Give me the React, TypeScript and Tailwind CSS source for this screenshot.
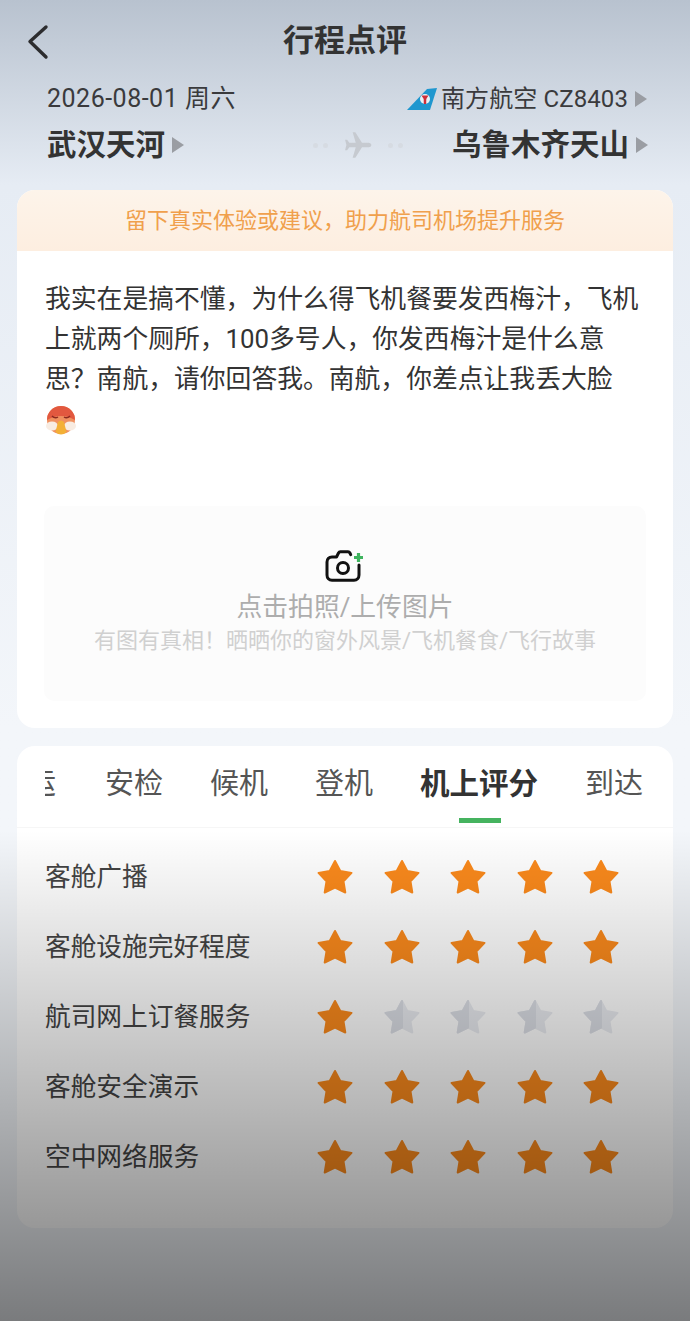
const tabs = ['安检', '候机', '登机', '机上评分', '到达'];

const ratings = [
  { label: '客舱广播', score: 5 },
  { label: '客舱设施完好程度', score: 5 },
  { label: '航司网上订餐服务', score: 1 },
  { label: '客舱安全演示', score: 5 },
  { label: '空中网络服务', score: 5 },
];

const STAR = 'M18 2 L23.300 12 L34.500 13.900 L26.500 22.300 L28.300 33.500 L18 28.500 L7.700 33.500 L9.500 22.300 L1.500 13.900 L12.700 12 Z';

function Star({ on }: { on: boolean }) {
  return (
    <svg width="36" height="36" viewBox="0 0 36 36">
      {on ? (
        <path d={STAR} fill="#fb8a1c" stroke="#fb8a1c" strokeWidth="2" strokeLinejoin="round" />
      ) : (
        <>
          <path d={STAR} fill="#eaecf1" stroke="#eaecf1" strokeWidth="2" strokeLinejoin="round" />
          <path d="M18 2 L12.700 12 L1.500 13.900 L9.500 22.300 L7.700 33.500 L18 28.500 Z" fill="#dcdfe6" stroke="#dcdfe6" strokeWidth="2" strokeLinejoin="round" />
        </>
      )}
    </svg>
  );
}

function Caret() {
  return <span className="ml-[7px] h-0 w-0 border-y-[8px] border-l-[12px] border-y-transparent border-l-[#9a9da3]" />;
}

function TailLogo() {
  return (
    <svg width="30" height="22" viewBox="0 0 30 22">
      <path d="M0 22 L20 1 L30 0 L23 22 Z" fill="#1f97cf" />
      <circle cx="18" cy="11" r="5" fill="#e9f2f6" />
      <path d="M14.500 7.500 L21.500 7.500 L19.300 11 L19.200 16 L16.800 16 L16.700 11 Z" fill="#cf2f3a" />
    </svg>
  );
}

function BackArrow() {
  return (
    <svg width="24" height="36" viewBox="0 0 24 36" fill="none">
      <path d="M20 3 L4 17.500 L20 33" stroke="#2c2c2e" strokeWidth="3.400" strokeLinecap="round" strokeLinejoin="round" />
    </svg>
  );
}

function CameraPlus() {
  return (
    <svg width="40" height="34" viewBox="0 0 40 34" fill="none">
      <path
        d="M9 8 H11.500 L13.500 4 C13.900 3.200 14.500 2.700 15.400 2.700 H23 C23.900 2.700 24.500 3.200 24.900 4 L25.700 5.700 M34 16 V26 C34 29 32 31.300 29 31.300 H7 C4 31.300 2 29 2 26 V13 C2 10 4 8 7 8 H9"
        stroke="#111"
        strokeWidth="3"
        strokeLinecap="round"
        strokeLinejoin="round"
      />
      <circle cx="18" cy="19" r="5.500" stroke="#111" strokeWidth="3" />
      <path d="M33.500 4 V13 M29 8.500 H38" stroke="#3fb45f" strokeWidth="3.200" />
    </svg>
  );
}

function Emoji() {
  return (
    <svg width="32" height="32" viewBox="0 0 32 32">
      <circle cx="16" cy="15" r="14" fill="#f0905f" />
      <path d="M2 15 A14 14 0 0 1 30 15 Q16 7 2 15 Z" fill="#e2583f" />
      <path d="M7 11 Q10 14 13 12 M19 12 Q22 14 25 11" stroke="#8a2a20" strokeWidth="1.500" fill="none" />
      <ellipse cx="7" cy="21" rx="6" ry="4.500" fill="#f8ece2" />
      <ellipse cx="25" cy="21" rx="6" ry="4.500" fill="#f8ece2" />
      <path d="M13 17 Q16 14 19 17 L21.500 27 Q16 32 10.500 27 Z" fill="#f3b036" />
    </svg>
  );
}

export default function App() {
  return (
    <div className="relative h-[1321px] w-[690px] overflow-hidden bg-gradient-to-b from-[#b8c2cf] via-[#e6ecf4] via-[14%] to-[#f3f6fa] to-[55%] font-['Roboto','Noto_Sans_CJK_SC',sans-serif] text-[#333]">
      {/* Header */}
      <div className="relative flex h-[83px] items-center justify-center">
        <div className="absolute left-[26px] top-[24px]">
          <BackArrow />
        </div>
        <h1 className="text-[31px] font-bold text-[#333]">行程点评</h1>
      </div>

      {/* Flight info */}
      <div className="flex h-[32px] items-center justify-between pl-[47px] pr-[43px] text-[#3a3a3c]">
        <span className="text-[25px] tracking-[0.5px]">2026-08-01 周六</span>
        <span className="flex items-center text-[24px] tracking-[0.1px]">
          <TailLogo />
          <span className="ml-[4px]">南方航空 CZ8403</span>
          <Caret />
        </span>
      </div>
      <div className="mt-[14px] flex h-[32px] items-center pl-[47px] pr-[42px]">
        <span className="text-[29.500px] font-bold">武汉天河</span>
        <Caret />
        <div className="ml-auto mr-[49px] flex items-center">
          <span className="h-[5px] w-[5px] rounded-full bg-[#d6dbe2]" />
          <span className="ml-[5px] h-[5px] w-[5px] rounded-full bg-[#d6dbe2]" />
          <svg className="mx-[14px]" width="32" height="32" viewBox="0 0 24 24" fill="#c6cad0">
            <path d="M22 12c0-1-1-1.700-2-1.700h-5L10 2.500H8l2.300 7.800H5.500L3.800 8H2.300l1 4-1 4h1.500l1.700-2.300h4.800L8 21.500h2l5-7.800h5c1 0 2-.7 2-1.700z" />
          </svg>
          <span className="h-[5px] w-[5px] rounded-full bg-[#d6dbe2]" />
          <span className="ml-[5px] h-[5px] w-[5px] rounded-full bg-[#d6dbe2]" />
        </div>
        <span className="text-[29.500px] font-bold">乌鲁木齐天山</span>
        <Caret />
      </div>

      {/* Review card */}
      <div className="mx-[17px] mt-[29px] overflow-hidden rounded-[18px] bg-white">
        <div className="flex h-[61px] items-center justify-center bg-gradient-to-b from-[#fdf4ea] to-[#fdeee0] text-[22px] text-[#f0a04c]">
          留下真实体验或建议，助力航司机场提升服务
        </div>
        <div className="px-[28px] pt-[28px] text-[25.800px] leading-[40px] text-[#333]">
          我实在是搞不懂，为什么得飞机餐要发西梅汁，飞机上就两个厕所，100多号人，你发西梅汁是什么意思？南航，请你回答我。南航，你差点让我丢大脸
        </div>
        <div className="mt-[6px] h-[32px] px-[28px]">
          <Emoji />
        </div>
        <div className="mx-[27px] mt-[69px] flex h-[195px] flex-col items-center rounded-[10px] bg-[#fcfcfc] pt-[43px]">
          <CameraPlus />
          <p className="mt-[7px] text-[25.800px] leading-[34px] text-[#adadad]">点击拍照/上传图片</p>
          <p className="mt-[2px] text-[22px] leading-[30px] text-[#d0d0d0]">有图有真相！晒晒你的窗外风景/飞机餐食/飞行故事</p>
        </div>
        <div className="h-[27px]" />
      </div>

      {/* Rating card */}
      <div className="mx-[17px] mt-[18px] h-[482px] overflow-hidden rounded-[18px] bg-white">
        <div className="relative flex h-[82px] items-center border-b border-[#f6f6f6] pb-[4px] pl-[28px] text-[29px] text-[#555]">
          <span className="flex w-[11px] justify-end overflow-hidden">
            <span className="shrink-0">运</span>
          </span>
          <div className="ml-[49px] flex items-center gap-[47px]">
            {tabs.map((t) => (
              <span key={t} className={t === '机上评分' ? 'text-[29.500px] font-bold text-[#333]' : ''}>
                {t}
              </span>
            ))}
          </div>
          <span className="absolute bottom-[4px] left-[442px] h-[5px] w-[42px] bg-[#45b35f]" />
        </div>
        <div className="pt-[14px]">
          {ratings.map((r) => (
            <div key={r.label} className="flex h-[70px] items-center pl-[28px]">
              <span className="w-[272px] text-[25.700px] text-[#444]">{r.label}</span>
              <div className="flex gap-[30.500px]">
                {[1, 2, 3, 4, 5].map((n) => (
                  <Star key={n} on={n <= r.score} />
                ))}
              </div>
            </div>
          ))}
        </div>
      </div>

      {/* Dimming from the bottom */}
      <div className="pointer-events-none absolute inset-x-0 bottom-0 h-[491px] bg-gradient-to-b from-black/0 to-black/50" />
    </div>
  );
}
